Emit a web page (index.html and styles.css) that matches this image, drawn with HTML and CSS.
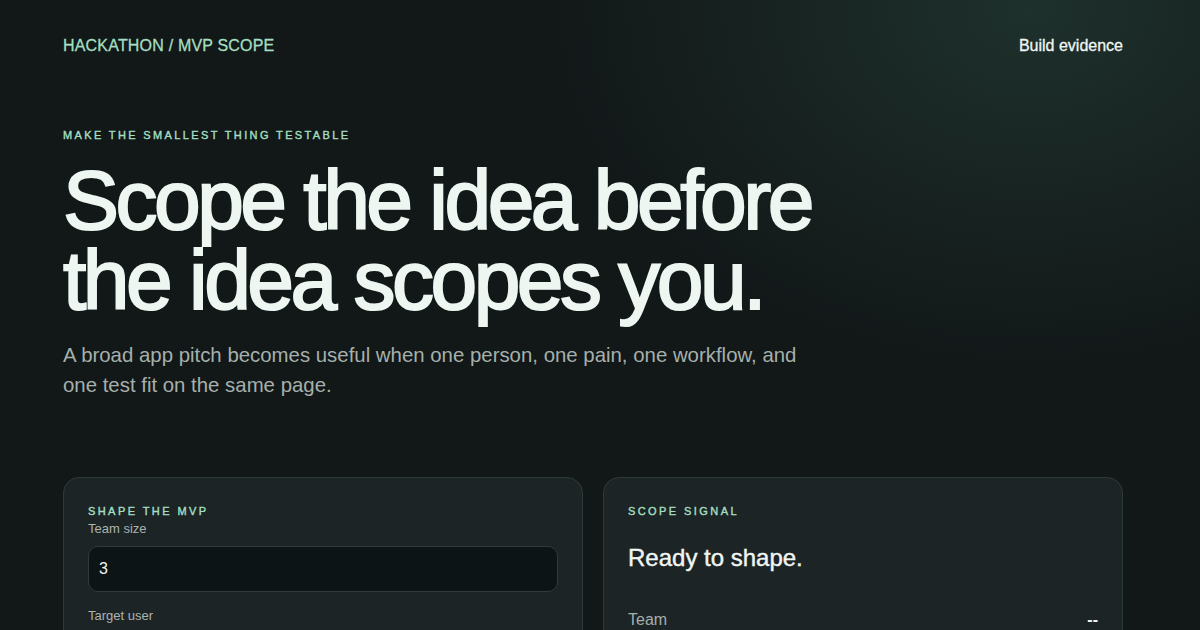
FILE: index.html
```html
<!DOCTYPE html>
<html lang="en">
<head>
<meta charset="utf-8">
<title>Hackathon / MVP Scope</title>
<link rel="stylesheet" href="styles.css">
</head>
<body>
<div class="page">
  <header class="nav">
    <a class="brand" href="#">HACKATHON / MVP SCOPE</a>
    <a class="nav-link" href="#">Build evidence</a>
  </header>
  <section class="hero">
    <p class="eyebrow">MAKE THE SMALLEST THING TESTABLE</p>
    <h1 class="title">Scope the idea before the idea scopes you.</h1>
    <p class="lede">A broad app pitch becomes useful when one person, one pain, one workflow, and one test fit on the same page.</p>
  </section>
  <section class="grid">
    <div class="card">
      <p class="card-label">SHAPE THE MVP</p>
      <label class="field-label">Team size</label>
      <div class="input">3</div>
      <label class="field-label field-gap">Target user</label>
      <div class="input"></div>
    </div>
    <div class="card">
      <p class="card-label">SCOPE SIGNAL</p>
      <h2 class="signal">Ready to shape.</h2>
      <div class="row"><span>Team</span><span class="val">--</span></div>
      <div class="row"><span>User</span><span class="val">--</span></div>
    </div>
  </section>
</div>
</body>
</html>
```

FILE: styles.css
```css
html, body {
  margin: 0;
  padding: 0;
}
body {
  min-height: 900px;
  background:
    radial-gradient(ellipse 700px 520px at 1030px 10px, rgba(40, 70, 60, 0.55), rgba(40, 70, 60, 0) 70%),
    #121718;
  color: #eef5f1;
  font-family: "Liberation Sans", Arial, sans-serif;
}
.page {
  width: 1060px;
  margin: 0 0 0 63px;
}
.nav {
  display: flex;
  justify-content: space-between;
  align-items: center;
  height: 90px;
  padding-top: 1px;
}
.brand {
  color: #a3dfc0;
  text-decoration: none;
  font-size: 16px;
  letter-spacing: 0.012em;
  -webkit-text-stroke: 0.3px #a3dfc0;
}
.nav-link {
  color: #f1f6f3;
  text-decoration: none;
  font-size: 16px;
  -webkit-text-stroke: 0.3px #f1f6f3;
}
.hero {
  padding-top: 37px;
}
.eyebrow {
  margin: 0;
  color: #a3dfc0;
  font-size: 11px;
  letter-spacing: 0.215em;
  line-height: 14px;
  -webkit-text-stroke: 0.4px #a3dfc0;
}
.title {
  margin: 18px 0 0;
  font-size: 84px;
  line-height: 80px;
  font-weight: 400;
  letter-spacing: -0.042em;
  color: #eef6f1;
  -webkit-text-stroke: 2px #eef6f1;
  max-width: 780px;
}
.lede {
  margin: 20px 0 0;
  max-width: 760px;
  font-size: 20.4px;
  line-height: 30px;
  color: #a5b0ab;
}
.grid {
  display: grid;
  grid-template-columns: 1fr 1fr;
  gap: 20px;
  margin-top: 77px;
}
.card {
  background: #1d2426;
  border: 1px solid #2e3a3a;
  border-radius: 16px;
  padding: 27px 24px 24px;
  min-height: 300px;
}
.card-label {
  margin: 0;
  color: #a3dfc0;
  font-size: 11px;
  letter-spacing: 0.22em;
  line-height: 12px;
  -webkit-text-stroke: 0.4px #a3dfc0;
}
.field-label {
  display: block;
  margin-top: 4px;
  font-size: 13px;
  color: #aab3af;
  line-height: 16px;
}
.field-gap {
  margin-top: 16px;
}
.input {
  margin-top: 9px;
  height: 44px;
  border: 1px solid #2f3b3b;
  border-radius: 10px;
  background: #0c1416;
  color: #eef5f1;
  font-size: 16px;
  line-height: 44px;
  padding: 0 10px;
}
.signal {
  margin: 26px 0 0;
  font-size: 24px;
  font-weight: 400;
  line-height: 30px;
  color: #f1f6f3;
  -webkit-text-stroke: 0.4px #f1f6f3;
}
.row {
  display: flex;
  justify-content: space-between;
  margin-top: 38px;
  font-size: 16px;
  line-height: 18px;
  color: #a5b0ab;
}
.row + .row {
  margin-top: 16px;
}
.val {
  color: #eef5f1;
  font-weight: 700;
}
```
